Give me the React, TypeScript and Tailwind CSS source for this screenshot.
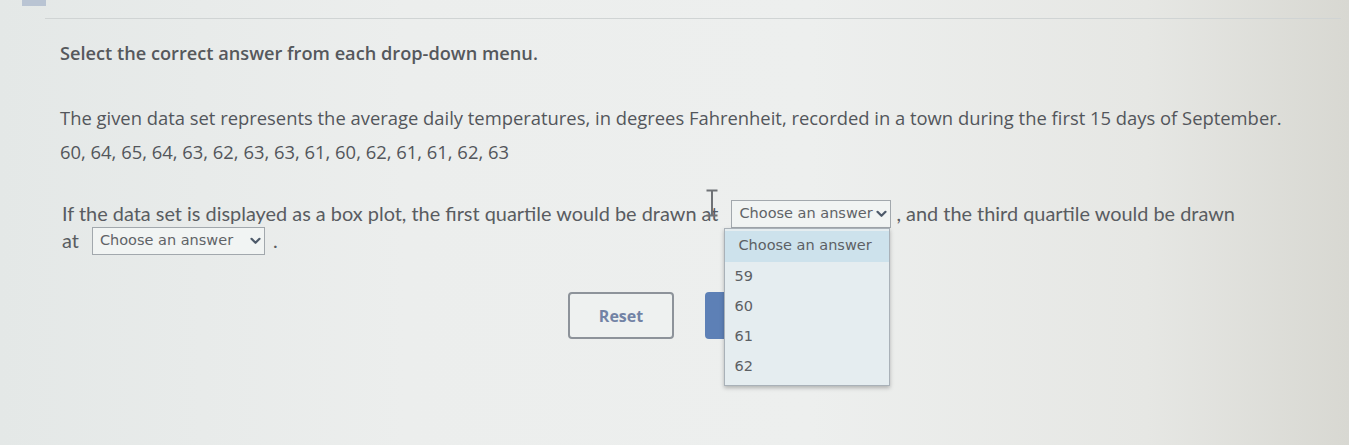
import React from "react";

function Chevron() {
  return (
    <svg width="11" height="8" viewBox="0 0 11 8" className="ml-[2px] shrink-0">
      <path d="M1.5 1.8 L5.5 5.8 L9.5 1.8" fill="none" stroke="#4d5a6a" strokeWidth="2.2" strokeLinecap="round" strokeLinejoin="round" />
    </svg>
  );
}

function SelectBox({ w }: { w: string }) {
  return (
    <span
      className={`inline-flex h-[28px] items-center justify-between border border-[#a2a8ad] bg-[#f1f4f3] pl-[7px] pr-[3px] text-[14.5px] text-[#5f6367] ${w}`}
      style={{ fontFamily: '"DejaVu Sans", sans-serif' }}
    >
      <span>Choose an answer</span>
      <Chevron />
    </span>
  );
}

export default function App() {
  const options = ["59", "60", "61", "62"];
  return (
    <div
      className="relative h-[445px] w-full overflow-hidden bg-[linear-gradient(90deg,#e4e8e7_0%,#eceeed_30%,#edefee_60%,#e6e7e4_85%,#d8d8d2_100%)] text-[#54575c]"
      style={{ fontFamily: '"Open Sans", sans-serif' }}
    >
      {/* top strip */}
      <div className="h-[18px] pl-[22px]">
        <div className="h-[6px] w-[24px] bg-[#b9c4d3]" />
      </div>
      <div className="ml-[45px] mr-[8px] h-px bg-[#d0d4d4]" />

      <div className="pl-[60px] pt-[21px]">
        <p className="text-[18.2px] font-semibold leading-[26px] text-[#55585c]">
          Select the correct answer from each drop-down menu.
        </p>
        <p className="mt-[39px] text-[18.4px] leading-[26px] text-[#53565b]">
          The given data set represents the average daily temperatures, in degrees Fahrenheit, recorded in a town during the first 15 days of September.
        </p>
        <p className="mt-[8px] text-[18.4px] leading-[26px] text-[#53565b]">
          60, 64, 65, 64, 63, 62, 63, 63, 61, 60, 62, 61, 61, 62, 63
        </p>

        <div className="mt-[35px] text-[19.9px] text-[#595c61]" style={{ fontFamily: "Lato, sans-serif" }}>
          <div className="flex h-[27px] items-center pl-[2px]">
            <span>If the data set is displayed as a box plot, the first quartile would be drawn at</span>
            <span className="relative ml-[13px] inline-flex">
              <SelectBox w="w-[160px]" />
              <div
                className="absolute left-[-7px] top-[28px] z-10 w-[166px] border border-[#a9b1b8] bg-[#e5edf0] pt-[2px] pb-[3px] text-[14.5px] text-[#5c6064] shadow-[0_2px_4px_rgba(0,0,0,0.25)]"
                style={{ fontFamily: '"DejaVu Sans", sans-serif' }}
              >
                <div className="flex h-[31px] items-center bg-[#cde2ec] pl-[13px]">Choose an answer</div>
                {options.map((o) => (
                  <div key={o} className="flex h-[30px] items-center pl-[9px]">
                    {o}
                  </div>
                ))}
              </div>
            </span>
            <span className="ml-[5px]">, and the third quartile would be drawn</span>
          </div>
          <div className="flex h-[27px] items-center pl-[2px]">
            <span>at</span>
            <span className="ml-[13px] inline-flex">
              <SelectBox w="w-[173px]" />
            </span>
            <span className="ml-[8px]">.</span>
          </div>
        </div>

        <div className="mt-[38px] flex pl-[508px]">
          <button className="flex h-[47px] w-[106px] items-center justify-center rounded-[4px] border-2 border-[#8d939a] bg-[#eef1f0] text-[16px] font-bold text-[#7283a5]">
            Reset
          </button>
          <button aria-label="Next" className="ml-[31px] h-[47px] w-[106px] rounded-[4px] bg-[#5d80b6]" />
        </div>
      </div>

      {/* text cursor overlay */}
      <svg className="absolute left-[705px] top-[189px]" width="14" height="28" viewBox="0 0 14 28">
        <path d="M1.5 1.5 H12.5 M7 1.5 V26.5 M1.5 26.5 H12.5" fill="none" stroke="#6f7276" strokeWidth="2" />
      </svg>
    </div>
  );
}
